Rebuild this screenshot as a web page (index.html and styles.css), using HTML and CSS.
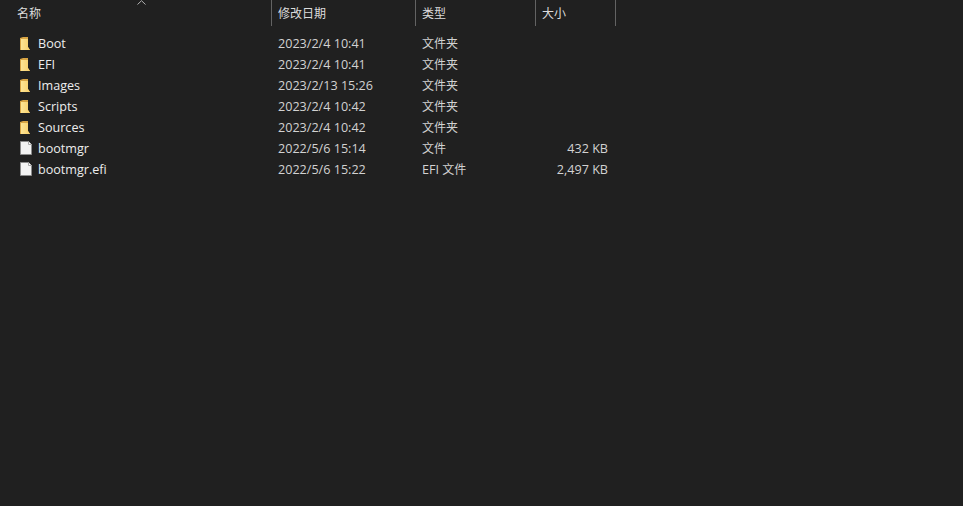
FILE: index.html
```html
<!DOCTYPE html>
<html lang="zh-CN">
<head>
<meta charset="utf-8">
<title>文件列表</title>
<link rel="stylesheet" href="styles.css">
</head>
<body>
<div class="list">
  <div class="header">
    <div class="hcell c-name">名称
      <svg class="caret" width="9" height="5" viewBox="0 0 9 5"><path d="M0.5 4.5 L4.5 0.7 L8.5 4.5" fill="none" stroke="#b0b0b0" stroke-width="1"/></svg>
    </div>
    <div class="hcell c-date">修改日期</div>
    <div class="hcell c-type">类型</div>
    <div class="hcell c-size">大小</div>
  </div>
  <div class="rows">
    <div class="row"><div class="cell c-name"><svg class="icon" viewBox="0 0 12 15"><use href="#folder"/></svg>Boot</div><div class="cell c-date">2023/2/4 10:41</div><div class="cell c-type cjk">文件夹</div><div class="cell c-size"></div></div>
    <div class="row"><div class="cell c-name"><svg class="icon" viewBox="0 0 12 15"><use href="#folder"/></svg>EFI</div><div class="cell c-date">2023/2/4 10:41</div><div class="cell c-type cjk">文件夹</div><div class="cell c-size"></div></div>
    <div class="row"><div class="cell c-name"><svg class="icon" viewBox="0 0 12 15"><use href="#folder"/></svg>Images</div><div class="cell c-date">2023/2/13 15:26</div><div class="cell c-type cjk">文件夹</div><div class="cell c-size"></div></div>
    <div class="row"><div class="cell c-name"><svg class="icon" viewBox="0 0 12 15"><use href="#folder"/></svg>Scripts</div><div class="cell c-date">2023/2/4 10:42</div><div class="cell c-type cjk">文件夹</div><div class="cell c-size"></div></div>
    <div class="row"><div class="cell c-name"><svg class="icon" viewBox="0 0 12 15"><use href="#folder"/></svg>Sources</div><div class="cell c-date">2023/2/4 10:42</div><div class="cell c-type cjk">文件夹</div><div class="cell c-size"></div></div>
    <div class="row"><div class="cell c-name"><svg class="icon" viewBox="0 0 12 15"><use href="#file"/></svg>bootmgr</div><div class="cell c-date">2022/5/6 15:14</div><div class="cell c-type cjk">文件</div><div class="cell c-size">432 KB</div></div>
    <div class="row"><div class="cell c-name"><svg class="icon" viewBox="0 0 12 15"><use href="#file"/></svg>bootmgr.efi</div><div class="cell c-date">2022/5/6 15:22</div><div class="cell c-type">EFI <span class="cjk">文件</span></div><div class="cell c-size">2,497 KB</div></div>
  </div>
</div>
<svg class="defs" width="0" height="0">
  <defs>
    <linearGradient id="fg" x1="0" y1="0" x2="1" y2="0"><stop offset="0" stop-color="#fde595"/><stop offset="1" stop-color="#f8cf69"/></linearGradient>
    <symbol id="folder" viewBox="0 0 12 15">
      <path d="M0 2 L3 1 H8 V11 L10 14 H1 L0 14 Z" fill="#d8a544"/>
      <path d="M1 3 H8 V11 L10 14 H1 Z" fill="url(#fg)"/>
    </symbol>
    <symbol id="file" viewBox="0 0 12 15">
      <path d="M0.5 0.5 H8.5 L11.5 3.5 V13.5 H0.5 Z" fill="#f3f3f3" stroke="#8c8c8c"/>
      <path d="M8.5 0.5 V3.5 H11.5" fill="#fff" stroke="#a8a8a8"/>
    </symbol>
  </defs>
</svg>
</body>
</html>
```
FILE: styles.css
```css
html, body {
  margin: 0;
  height: 100%;
  background: #202020;
}
body {
  color: #e6e6e6;
  font-family: "Open Sans", "Noto Sans CJK SC", sans-serif;
  font-size: 12px;
  overflow: hidden;
}
.list {
  width: 616px;
}
.header {
  display: flex;
  height: 26px;
  position: relative;
}
.hcell {
  box-sizing: border-box;
  padding-left: 6px;
  line-height: 27px;
  border-right: 1px solid #636363;
  color: #dcdcdc;
}
.header .c-name {
  padding-left: 17px;
}
.caret {
  position: absolute;
  left: 137px;
  top: 0;
}
.c-name { width: 272px; }
.c-date { width: 144px; }
.c-type { width: 120px; }
.c-size { width: 80px; }
.rows {
  padding-top: 7px;
}
.row {
  display: flex;
  height: 21px;
  line-height: 21px;
  white-space: nowrap;
}
.cell {
  box-sizing: border-box;
  padding-left: 6px;
  color: #d2d2d2;
  font-size: 12.6px;
}
.cell.cjk,
.cell .cjk {
  font-size: 12px;
}
.row .c-name {
  display: flex;
  align-items: center;
  padding-left: 20px;
  color: #ededed;
}
.row .c-size {
  padding-left: 0;
  padding-right: 8px;
  text-align: right;
}
.icon {
  width: 12px;
  height: 15px;
  flex: none;
  margin-right: 6px;
}
.defs {
  position: absolute;
}
```
